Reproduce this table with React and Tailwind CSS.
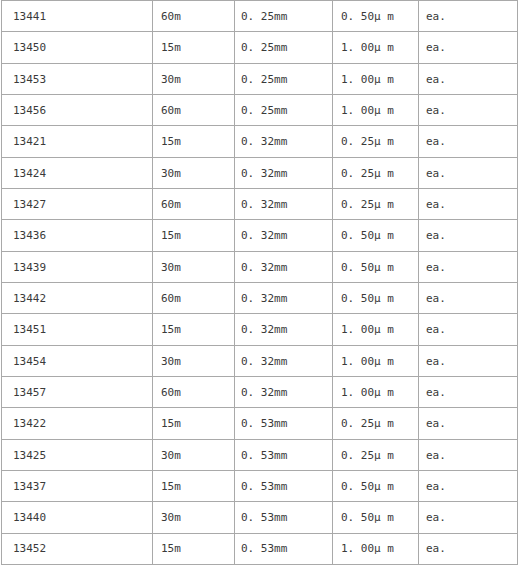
import React from "react";

const rows = [
  ["13441", "60m", "0. 25mm", "0. 50μ m", "ea."],
  ["13450", "15m", "0. 25mm", "1. 00μ m", "ea."],
  ["13453", "30m", "0. 25mm", "1. 00μ m", "ea."],
  ["13456", "60m", "0. 25mm", "1. 00μ m", "ea."],
  ["13421", "15m", "0. 32mm", "0. 25μ m", "ea."],
  ["13424", "30m", "0. 32mm", "0. 25μ m", "ea."],
  ["13427", "60m", "0. 32mm", "0. 25μ m", "ea."],
  ["13436", "15m", "0. 32mm", "0. 50μ m", "ea."],
  ["13439", "30m", "0. 32mm", "0. 50μ m", "ea."],
  ["13442", "60m", "0. 32mm", "0. 50μ m", "ea."],
  ["13451", "15m", "0. 32mm", "1. 00μ m", "ea."],
  ["13454", "30m", "0. 32mm", "1. 00μ m", "ea."],
  ["13457", "60m", "0. 32mm", "1. 00μ m", "ea."],
  ["13422", "15m", "0. 53mm", "0. 25μ m", "ea."],
  ["13425", "30m", "0. 53mm", "0. 25μ m", "ea."],
  ["13437", "15m", "0. 53mm", "0. 50μ m", "ea."],
  ["13440", "30m", "0. 53mm", "0. 50μ m", "ea."],
  ["13452", "15m", "0. 53mm", "1. 00μ m", "ea."],
];

const pads = ["pl-[11px]", "pl-[8px]", "pl-[6px]", "pl-[8px]", "pl-[7px]"];

export default function App() {
  return (
    <div className="bg-white h-[565px] overflow-hidden">
      <div
        className="ml-[1px] w-[517px] border-l border-t border-[#a9a9a9] grid grid-cols-[151px_82px_98px_86px_99px] text-[#3a3a3a] text-[11px]"
        style={{ fontFamily: '"DejaVu Sans Mono", monospace' }}
      >
        {rows.map((r, i) =>
          r.map((c, j) => (
            <div
              key={i + "-" + j}
              className={`h-[31.33px] pt-[2px] border-r border-b border-[#a9a9a9] flex items-center whitespace-pre ${pads[j]}`}
            >
              {c}
            </div>
          ))
        )}
      </div>
    </div>
  );
}
